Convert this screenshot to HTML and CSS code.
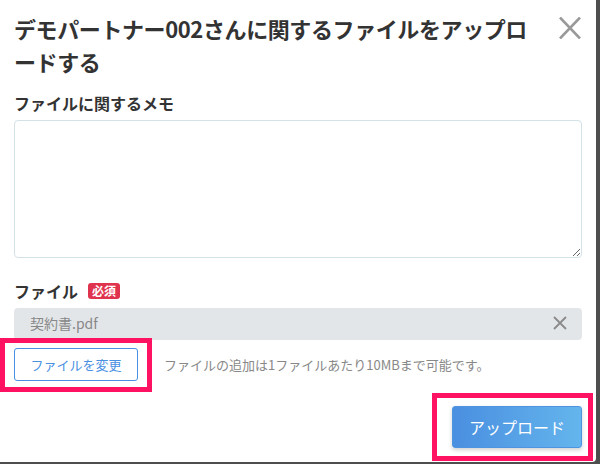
FILE: index.html
```html
<!DOCTYPE html>
<html lang="ja">
<head>
<meta charset="utf-8">
<title>ファイルをアップロード</title>
<link rel="stylesheet" href="styles.css">
</head>
<body>
<div class="modal">
  <div class="header">
    <h1 class="title">デモパートナー002さんに関するファイルをアップロードする</h1>
    <button class="close" aria-label="閉じる">
      <svg width="24" height="22" viewBox="0 0 24 22"><path d="M2 0.5 L22 21.5 M22 0.5 L2 21.5" stroke="#9a9a9a" stroke-width="2.6" fill="none"/></svg>
    </button>
  </div>

  <div class="field">
    <label class="label">ファイルに関するメモ</label>
    <textarea class="memo"></textarea>
  </div>

  <div class="field field-file">
    <div class="label">ファイル <span class="badge">必須</span></div>
    <div class="filebox">
      <span class="filename">契約書.pdf</span>
      <svg class="fileclear" width="14" height="14" viewBox="0 0 14 14"><path d="M1 1 L13 13 M13 1 L1 13" stroke="#8a8a8a" stroke-width="1.8" fill="none"/></svg>
    </div>
    <div class="filerow">
      <button class="btn-change">ファイルを変更</button>
      <span class="help">ファイルの追加は1ファイルあたり10MBまで可能です。</span>
    </div>
  </div>

  <div class="footer">
    <button class="btn-upload">アップロード</button>
  </div>

  <div class="mark mark-change"></div>
  <div class="mark mark-upload"></div>
</div>
</body>
</html>
```

FILE: styles.css
```css
* { box-sizing: border-box; }
html, body { margin: 0; padding: 0; }
body {
  width: 600px;
  height: 464px;
  background: #4e4e4e;
  font-family: "Noto Sans CJK JP", "Noto Sans", sans-serif;
  color: #333;
  overflow: hidden;
}
.modal {
  position: relative;
  width: 596px;
  height: 462px;
  background: #fff;
  border-bottom-right-radius: 4px;
  padding: 12px 14px 0 14px;
}
.header {
  display: flex;
  align-items: flex-start;
}
.title {
  flex: 1;
  margin: 0;
  font-size: 22px;
  line-height: 33px;
  font-weight: 700;
  letter-spacing: -0.4px;
  color: #333;
  padding-right: 10px;
  line-break: loose;
}
.close {
  flex: none;
  margin: 5px 0 0 0;
  padding: 0;
  width: 24px;
  height: 22px;
  border: none;
  background: none;
  display: block;
}
.close svg { display: block; }
.field { margin-top: 14px; }
.label {
  display: flex;
  align-items: center;
  font-size: 16px;
  line-height: 22px;
  font-weight: 700;
  color: #333;
}
.memo {
  display: block;
  width: 568px;
  height: 138px;
  margin-top: 6px;
  border: 1px solid #d3e2e6;
  border-radius: 4px;
  resize: vertical;
  font-family: inherit;
}
.field-file { margin-top: 22px; }
.badge {
  display: inline-block;
  margin-left: 10px;
  background: #e0344e;
  color: #fff;
  font-size: 12px;
  line-height: 16px;
  padding: 0 4px;
  border-radius: 3px;
  font-weight: 700;
}
.filebox {
  margin-top: 6px;
  height: 32px;
  width: 568px;
  background: #e3e6e9;
  border-radius: 4px;
  display: flex;
  align-items: center;
  justify-content: space-between;
  padding: 0 15px 2px 16px;
}
.filename {
  font-size: 14px;
  color: #888;
}
.fileclear { display: block; }
.filerow {
  margin-top: 8px;
  display: flex;
  align-items: center;
}
.btn-change {
  width: 124px;
  height: 33px;
  border: 1px solid #4a90e2;
  border-radius: 3px;
  background: #fff;
  color: #4a90e2;
  font-family: inherit;
  font-size: 13px;
  padding: 0;
}
.help {
  margin-left: 26px;
  font-size: 13px;
  color: #888;
}
.footer {
  margin-top: 25px;
  display: flex;
  justify-content: flex-end;
}
.btn-upload {
  width: 130px;
  height: 42px;
  border: 1px solid #4f94e0;
  border-radius: 3px;
  background: linear-gradient(90deg, #4a8fe0, #64b5ed);
  color: #fff;
  font-family: inherit;
  font-size: 16px;
  box-shadow: 0 2px 4px rgba(0,0,0,0.18);
  padding: 0;
}
.mark {
  position: absolute;
  border: 5px solid #ff1262;
}
.mark-change {
  left: 0;
  top: 338px;
  width: 152px;
  height: 54px;
}
.mark-upload {
  left: 432px;
  top: 393px;
  width: 161px;
  height: 68px;
}
```
